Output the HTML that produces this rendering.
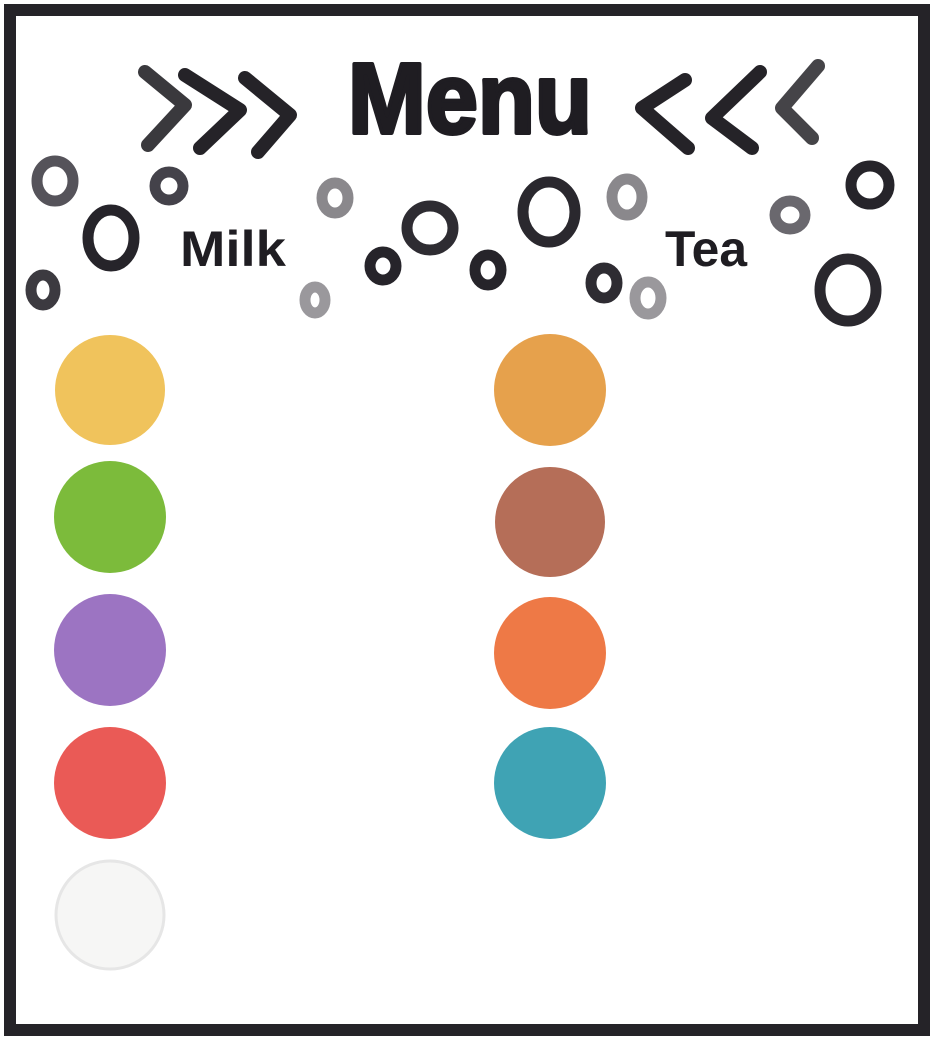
<!DOCTYPE html>
<html><head><meta charset="utf-8"><style>
html,body{margin:0;padding:0;background:#fff;width:936px;height:1041px;overflow:hidden}
svg{display:block}
text{font-family:"Liberation Sans",sans-serif;font-weight:bold;fill:#1f1d22}
</style></head><body>
<svg width="936" height="1041" viewBox="0 0 936 1041">
<rect x="10" y="10" width="914" height="1020" fill="none" stroke="#252328" stroke-width="12"/>
<g fill="none" stroke="#252328" stroke-width="14" stroke-linecap="round" stroke-linejoin="round">
<polyline points="145,72 185,105 148,145" opacity="0.9"/>
<polyline points="185,75 240,110 200,148"/>
<polyline points="245,78 290,115 258,152"/>
<polyline points="685,80 642,108 688,148"/>
<polyline points="760,72 712,118 752,148"/>
<polyline points="818,66 782,108 812,138" opacity="0.85"/>
</g>
<text x="348" y="133" font-size="100" textLength="244" lengthAdjust="spacingAndGlyphs" stroke="#1f1d22" stroke-width="4" stroke-linejoin="round">Menu</text>
<text x="180" y="266" font-size="50" textLength="106" lengthAdjust="spacingAndGlyphs">Milk</text>
<text x="665" y="266" font-size="50" textLength="82" lengthAdjust="spacingAndGlyphs">Tea</text>
<g fill="none" stroke-width="11">
<ellipse cx="55" cy="181" rx="18" ry="20" stroke="#55535a"/>
<ellipse cx="169" cy="186" rx="14" ry="14" stroke="#44424a"/>
<ellipse cx="111" cy="238" rx="23" ry="28" stroke="#26242a"/>
<ellipse cx="43" cy="290" rx="12" ry="15" stroke="#3c3a40"/>
<ellipse cx="335" cy="198" rx="13" ry="15" stroke="#8a888c"/>
<ellipse cx="315" cy="300" rx="10" ry="13" stroke="#9a989c"/>
<ellipse cx="383" cy="266" rx="13" ry="14" stroke="#26242a"/>
<ellipse cx="430" cy="228" rx="23" ry="22" stroke="#2e2c32"/>
<ellipse cx="488" cy="270" rx="13" ry="15" stroke="#26242a"/>
<ellipse cx="549" cy="212" rx="26" ry="30" stroke="#2a282e"/>
<ellipse cx="627" cy="197" rx="15" ry="18" stroke="#8a888c"/>
<ellipse cx="604" cy="283" rx="13" ry="15" stroke="#2e2c32"/>
<ellipse cx="648" cy="298" rx="13" ry="16" stroke="#9a989c"/>
<ellipse cx="790" cy="215" rx="15" ry="14" stroke="#6a686e"/>
<ellipse cx="870" cy="185" rx="19" ry="19" stroke="#26242a"/>
<ellipse cx="848" cy="290" rx="28" ry="31" stroke="#2a282e"/>
</g>
<g>
<circle cx="110" cy="390" r="55" fill="#f0c35c"/>
<circle cx="110" cy="517" r="56" fill="#7cbb3b"/>
<circle cx="110" cy="650" r="56" fill="#9c74c2"/>
<circle cx="110" cy="783" r="56" fill="#ea5a56"/>
<circle cx="110" cy="915" r="54" fill="#f6f6f5" stroke="#e6e6e6" stroke-width="3"/>
<circle cx="550" cy="390" r="56" fill="#e6a14c"/>
<circle cx="550" cy="522" r="55" fill="#b56e58"/>
<circle cx="550" cy="653" r="56" fill="#ee7946"/>
<circle cx="550" cy="783" r="56" fill="#3fa3b4"/>
</g>
</svg>
</body></html>
